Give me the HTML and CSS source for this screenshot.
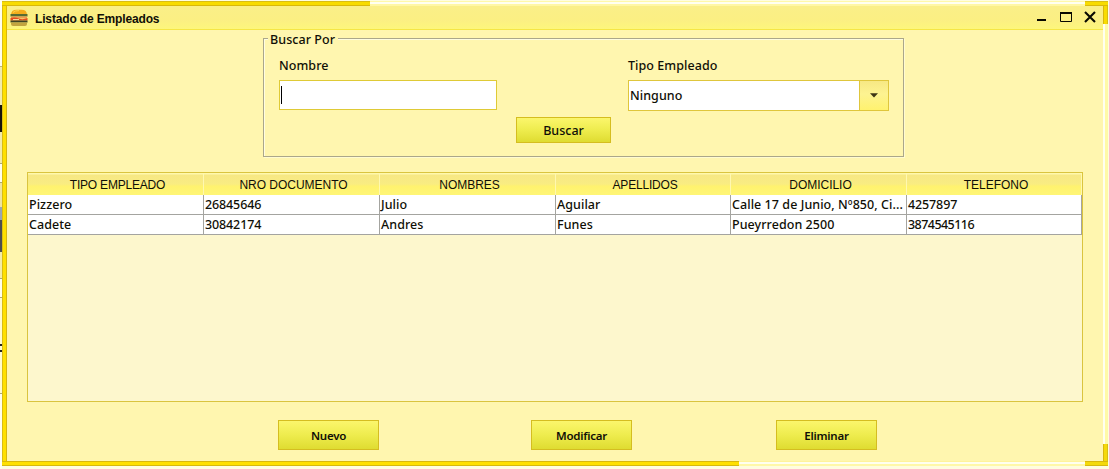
FILE: index.html
```html
<!DOCTYPE html>
<html lang="es">
<head>
<meta charset="utf-8">
<title>Listado de Empleados</title>
<link rel="stylesheet" href="styles.css">
</head>
<body>
<div class="desktop">
  <main class="window">
    <header class="titlebar">
      <svg class="app-icon" width="18" height="18" viewBox="0 0 18 18">
        <path d="M1 6Q1 .7 6.500 .7H11.500Q17 .7 17 6Z" fill="#f4ad1b"/>
        <path d="M3 3.500Q5 1.500 9 1.600" stroke="#ffd34c" fill="none"/>
        <rect x=".5" y="5" width="17" height="2.500" fill="#586c32"/>
        <path d="M1 7.500H17V9.500H1Z" fill="#ed9b4c"/>
        <path d="M.5 9Q5 8 9 9.500T17.500 9V11.500H.5Z" fill="#e54c1d"/>
        <path d="M3 10.500H9" stroke="#f6d692"/>
        <path d="M.5 11.500H17.500V13.500H.5Z" fill="#3e4425"/>
        <path d="M1 13.500H17V15Q17 17 15 17H3Q1 17 1 15Z" fill="#c2a43f"/>
      </svg>
      <h1 class="title">Listado de Empleados</h1>
      <svg class="controls" width="62" height="16" viewBox="0 0 62 16">
        <path d="M1 11H10" stroke="#080800" stroke-width="2"/>
        <path d="M24.500 4V12.500H35.500V4" fill="none" stroke="#080800"/>
        <path d="M24 4H36" stroke="#080800" stroke-width="2"/>
        <path d="M49 3L59 13M59 3L49 13" stroke="#080800" stroke-width="2.100"/>
      </svg>
    </header>
    <section class="search">
      <div class="legend">Buscar Por</div>
      <div class="fields">
        <div class="field">
          <label>Nombre</label>
          <div class="input"><span class="caret"></span></div>
        </div>
        <div class="field">
          <label>Tipo Empleado</label>
          <div class="combo">
            <span class="combo-value">Ninguno</span>
            <span class="combo-arrow"><svg width="8" height="5" viewBox="0 0 8 5"><path d="M0 .3H8L4 4.600Z" fill="#3d3514"/></svg></span>
          </div>
        </div>
      </div>
      <button class="button button-search">Buscar</button>
    </section>
    <section class="table">
      <div class="row head"><span class="tight">TIPO EMPLEADO</span><span>NRO DOCUMENTO</span><span>NOMBRES</span><span class="tight">APELLIDOS</span><span>DOMICILIO</span><span>TELEFONO</span></div>
      <div class="row"><span>Pizzero</span><span class="num">26845646</span><span>Julio</span><span>Aguilar</span><span class="address">Calle 17 de Junio, Nº850, Ci...</span><span class="num">4257897</span></div>
      <div class="row"><span>Cadete</span><span class="num">30842174</span><span>Andres</span><span>Funes</span><span>Pueyrredon 2500</span><span class="phone">3874545116</span></div>
    </section>
    <footer class="actions">
      <button class="button">Nuevo</button>
      <button class="button">Modificar</button>
      <button class="button">Eliminar</button>
    </footer>
  </main>
</div>
</body>
</html>
```
FILE: styles.css
```css
* { box-sizing: border-box; }
body {
  margin: 0;
  font: 500 12.5px/16px "Noto Sans", "Open Sans", sans-serif;
  letter-spacing: .06px;
  color: #100f06;
  background: #fffde0;
}
.desktop {
  width: 1109px;
  height: 469px;
  padding: 1px 1px 3px 2px;
  overflow: hidden;
  background:
    linear-gradient(to bottom, #fffef0 0 66px, #b8b47c 66px 67px, #f2ecae 67px 105px, #16130a 105px 132px, #f2eba9 132px 163px, #aaa778 163px 164px, #fffef0 164px 182px, #aaa778 182px 183px, #eee4a0 183px 207px, #9aa5b5 207px 220px, #4c4d50 220px 252px, #f2eba9 252px 278px, #aaa778 278px 279px, #fffef0 279px 297px, #aaa778 297px 298px, #fffbd0 298px 344px, #222 344px 346px, #fffbd0 346px 350px, #222 350px 352px, #fffbd0 352px 393px, #aaa778 393px 394px, #fffef0 394px) 0 0 / 2px 100% no-repeat,
    #fffde0;
}
.window {
  width: 1106px;
  height: 465px;
  padding: 5px;
  background:
    linear-gradient(#fff6af, #fff6af) 5px 5px / 1096px 455px no-repeat,
    linear-gradient(#d9bd14 0 1px, #f8dc00 1px 4px, #d9b80c 4px) 0 0 / 368px 5px no-repeat,
    linear-gradient(#d9bd14 0 1px, #f8dc00 1px 4px, #d9b80c 4px) 100% 0 / 23px 5px no-repeat,
    linear-gradient(to top, #d5b90e 0 1px, #ffe000 1px 4px, #d9b80c 4px) 0 100% / 737px 5px no-repeat,
    linear-gradient(to top, #d5b90e 0 1px, #f4da0a 1px 4px, #d9b80c 4px) 100% 100% / 23px 5px no-repeat,
    linear-gradient(to right, #d9bd14 0 1px, #ffe000 1px 4px, #d9b80c 4px) 0 0 / 5px 100% no-repeat,
    linear-gradient(to left, #d9bd14 0 1px, #f8dc00 1px 4px, #d9b80c 4px) 100% 0 / 5px 23px no-repeat,
    linear-gradient(to left, #d9bd14 0 1px, #f4da0a 1px 4px, #d9b80c 4px) 100% 100% / 5px 22px no-repeat,
    linear-gradient(#fff9a8 0 1px, #fffff0 1px 3px, #fff7a5 3px) 0 0 / 100% 5px no-repeat,
    linear-gradient(to top, #fff8a9 0 2px, #fffff0 2px 4px, #fff39c 4px) 0 100% / 100% 5px no-repeat,
    linear-gradient(to left, #fffaa8 0 3px, #fffff0 3px 5px);
}
.titlebar {
  display: flex;
  align-items: flex-start;
  height: 24px;
  padding: 3px 5px 0 3px;
  border-bottom: 1px solid #f5e646;
  background: linear-gradient(#faef88, #fbef83 60%, #fdf67c);
}
.title {
  flex: 1;
  margin: 3px 0 0 7px;
  font: bold 12px/14px "Liberation Sans", Arial, sans-serif;
  letter-spacing: -.15px;
}
.search {
  width: 641px;
  height: 119px;
  margin: 8px 0 0 256px;
  border: 1px solid #aba78a;
  box-shadow: inset 1px 1px #fffde0, 1px 1px #fffbd0;
}
.legend {
  width: 70px;
  height: 16px;
  margin: -8px 0 0 4px;
  padding: 1px 0 0 2px;
  background: #fff6af;
  line-height: 16px;
  white-space: nowrap;
}
.fields { display: flex; justify-content: space-between; padding: 11px 14px 0 15px; }
.field { display: flex; flex-direction: column; }
.field label { height: 22px; line-height: 16px; }
.input { width: 218px; height: 30px; padding: 5px 1px; border: 1px solid #dfca36; background: #fff; }
.caret { display: block; width: 1px; height: 18px; background: #000; }
.combo { display: flex; width: 261px; height: 31px; border: 1px solid #dfc63c; background: #fff; }
.combo-value { flex: 1; padding: 7px 0 0 1px; }
.combo-arrow {
  display: flex;
  width: 29px;
  align-items: center;
  justify-content: center;
  border-left: 1px solid #dfc63c;
  background: linear-gradient(#f7e884, #fdf391 45%, #fff26f);
}
.button {
  width: 101px;
  height: 30px;
  padding: 2px 0 0;
  border: 1px solid #d5bd20;
  border-radius: 0;
  color: #100f06;
  font: 600 11.5px/16px "Noto Sans", sans-serif;
  letter-spacing: -.25px;
  background: linear-gradient(#fbf66c, #eeec4e 50%, #dfdc31);
}
.button-search { display: block; width: 95px; height: 26px; margin: 6px 0 0 252px; font-weight: 500; font-size: 12.5px; letter-spacing: 0; }
.table {
  width: 1056px;
  height: 230px;
  margin: 15px 0 0 20px;
  border: 1px solid #dac43f;
  background: #fdf7cd;
}
.row {
  display: grid;
  grid-template-columns: 176px 176px 176px 175px 176px 175px;
  height: 20px;
  background: #fff;
}
.row > span {
  padding-left: 1px;
  border-right: 1px solid #a4a4a0;
  border-bottom: 1px solid #a4a4a0;
  line-height: 19px;
  white-space: nowrap;
  overflow: hidden;
}
.row > .num { letter-spacing: -.12px; }
.row > .phone { letter-spacing: -.55px; }
.head { height: 22px; background: linear-gradient(#fff8ad 0 1px, #f7e884 2px, #f9ec82 50%, #fff26f 60%, #fff676); }
.head > span {
  padding: 0 0 0 4px;
  border-bottom: 0;
  border-right-color: #fff8b0;
  font: 12px/24px "Liberation Sans", Arial, sans-serif;
  letter-spacing: -.03px;
  text-align: center;
}
.head > .tight { letter-spacing: -.2px; }
.actions { display: flex; margin: 18px 0 0 271px; }
.actions .button:nth-child(2) { margin-left: 152px; }
.actions .button:nth-child(3) { margin-left: 144px; }
```
